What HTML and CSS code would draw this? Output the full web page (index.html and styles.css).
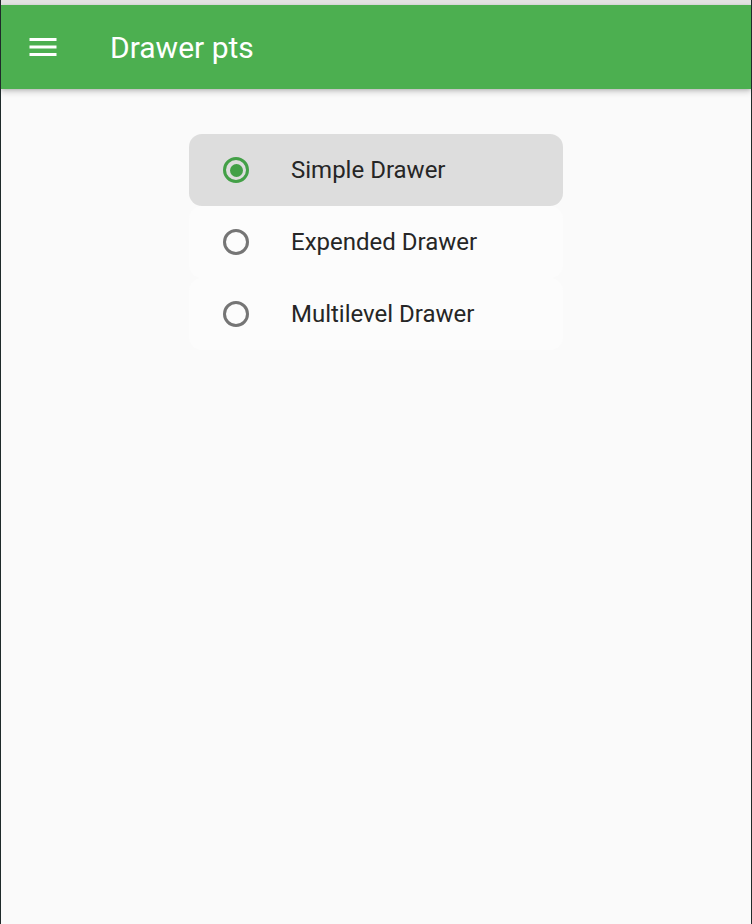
FILE: index.html
```html
<!DOCTYPE html>
<html>
<head>
<meta charset="utf-8">
<link rel="stylesheet" href="styles.css">
</head>
<body>
<div class="frame">
  <div class="topstrip"></div>
  <header class="appbar">
    <svg class="menu" width="36" height="36" viewBox="0 0 24 24"><path d="M3 18h18v-2H3v2zm0-5h18v-2H3v2zm0-7v2h18V6H3z" fill="#fff"/></svg>
    <h1 class="title">Drawer pts</h1>
  </header>
  <main class="content">
    <ul class="list">
      <li class="item selected">
        <span class="radio on"><span class="dot"></span></span>
        <span class="label">Simple Drawer</span>
      </li>
      <li class="item">
        <span class="radio"></span>
        <span class="label">Expended Drawer</span>
      </li>
      <li class="item">
        <span class="radio"></span>
        <span class="label">Multilevel Drawer</span>
      </li>
    </ul>
  </main>
</div>
</body>
</html>
```
FILE: styles.css
```css
html, body {
  margin: 0;
  padding: 0;
  height: 100%;
}
body {
  font-family: Roboto, "Noto Sans", sans-serif;
  background: #fafafa;
}
.frame {
  height: 924px;
  box-sizing: border-box;
  border-left: 1px solid #1f2a2a;
  border-right: 1px solid #1f2a2a;
  background: #fafafa;
  display: flex;
  flex-direction: column;
  overflow: hidden;
}
.topstrip {
  height: 5px;
  background: #e2e2e2;
  flex: none;
}
.appbar {
  height: 84px;
  background: #4caf50;
  display: flex;
  align-items: center;
  padding-left: 24px;
  box-shadow: 0 3px 6px rgba(0,0,0,0.18), 0 1px 3px rgba(0,0,0,0.12);
  position: relative;
  z-index: 1;
  flex: none;
}
.menu {
  display: block;
  flex: none;
}
.title {
  margin: 0 0 0 49px;
  color: #fff;
  font-size: 30px;
  font-weight: 400;
  letter-spacing: 0;
}
.content {
  flex: 1;
  padding-top: 45px;
  display: flex;
  justify-content: center;
  align-items: flex-start;
}
.list {
  list-style: none;
  margin: 0;
  padding: 0;
  width: 374px;
}
.item {
  height: 72px;
  display: flex;
  align-items: center;
  border-radius: 13px;
  background: #fcfcfc;
  padding-left: 34px;
  box-sizing: border-box;
}
.item.selected {
  background: #dddddd;
}
.radio {
  width: 26px;
  height: 26px;
  box-sizing: border-box;
  border: 3px solid #757575;
  border-radius: 50%;
  display: flex;
  align-items: center;
  justify-content: center;
  flex: none;
}
.radio.on {
  border-color: #43a047;
}
.dot {
  width: 13px;
  height: 13px;
  border-radius: 50%;
  background: #43a047;
}
.label {
  margin-left: 42px;
  font-size: 24px;
  color: #262626;
}
```
